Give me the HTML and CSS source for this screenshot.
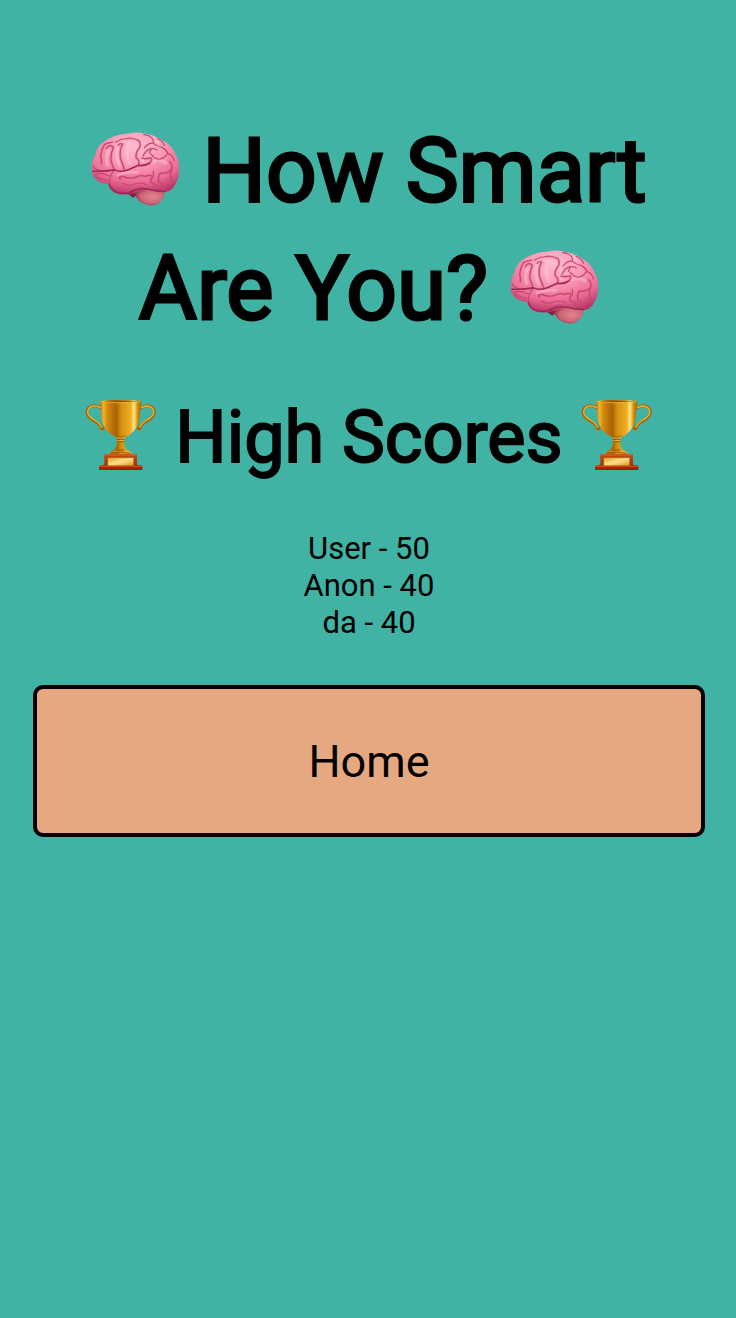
FILE: index.html
```html
<!DOCTYPE html>
<html lang="en">
<head>
<meta charset="utf-8">
<meta name="viewport" content="width=device-width, initial-scale=1">
<title>How Smart Are You?</title>
<link rel="stylesheet" href="styles.css">
</head>
<body>
<svg class="defs" width="0" height="0" aria-hidden="true">
  <defs>
    <radialGradient id="pink" cx=".5" cy=".22" r=".78">
      <stop offset="0" stop-color="#ffbdce"/><stop offset=".4" stop-color="#fb9ab7"/><stop offset=".75" stop-color="#ea6c94"/><stop offset="1" stop-color="#b93668"/>
    </radialGradient>
    <radialGradient id="lobe" cx=".6" cy=".5" r=".6">
      <stop offset="0" stop-color="#e2858c"/><stop offset=".65" stop-color="#cb6373"/><stop offset="1" stop-color="#8a2c47"/>
    </radialGradient>
    <linearGradient id="gold" x1="0" x2="1" y1="0" y2="0">
      <stop offset="0" stop-color="#b06c06"/><stop offset=".1" stop-color="#f0b324"/><stop offset=".2" stop-color="#cf860a"/><stop offset=".4" stop-color="#a86305"/><stop offset=".52" stop-color="#d88f0f"/><stop offset=".74" stop-color="#eeae25"/><stop offset=".82" stop-color="#ffe783"/><stop offset=".9" stop-color="#d9900f"/><stop offset="1" stop-color="#9c5a04"/>
    </linearGradient>
    <linearGradient id="plate" x1="0" x2="1" y1="0" y2="1">
      <stop offset="0" stop-color="#e3a02b"/><stop offset=".5" stop-color="#ffe08a"/><stop offset="1" stop-color="#dc9522"/>
    </linearGradient>
    <linearGradient id="wood" x1="0" x2="0" y1="0" y2="1">
      <stop offset="0" stop-color="#c5480f"/><stop offset="1" stop-color="#8f2605"/>
    </linearGradient>
    <symbol id="brain" viewBox="30 24 270 232">
      <path fill="#7d2343" d="M138 214L158 229L178 214Z"/>
      <path fill="url(#lobe)" d="M160 210C166 234 184 252 214 252C240 250 252 232 255 206C230 198 190 196 160 210Z"/>
      <path fill="url(#pink)" d="M33 148C31 122 36 110 44 96C48 74 66 58 84 50C102 40 124 35 146 34C164 29 184 31 200 36C222 38 238 48 252 58C270 66 280 82 286 96C294 108 299 124 297 142C298 162 292 180 284 190C278 204 266 212 252 211C230 212 214 206 198 204C180 206 168 214 150 217C130 221 108 220 94 208C86 200 82 192 84 186C70 188 52 182 44 172C36 164 32 156 33 148Z"/>
      <g fill="none" stroke-linecap="round" stroke-linejoin="round">
        <g stroke="#ffd0dc" stroke-width="9" opacity=".4">
          <path d="M84 84Q73 106 80 130M110 78Q104 100 116 132M144 62Q133 90 147 124M188 92Q180 106 188 118M206 46Q222 46 234 62M112 160Q142 148 168 152M220 120Q238 108 258 124"/>
        </g>
        <g stroke="#d0527c" stroke-width="8" opacity=".3">
          <path d="M71 67Q62 82 59 103Q64 116 61 126M77 79Q86 64 98 76Q90 92 90 114Q94 130 101 144M126 66Q116 84 119 108Q126 126 131 142M140 49Q158 46 176 56Q181 64 178 76Q164 92 167 108Q179 114 174 130Q190 134 204 126Q218 116 212 108Q194 112 184 108M188 102Q196 84 212 80"/>
          <path d="M119 172Q110 164 126 164Q149 174 168 166Q182 158 194 164Q210 157 218 166Q206 174 214 184Q228 186 231 198M240 154Q232 166 236 181Q249 186 249 204M242 154Q260 157 274 144Q280 132 269 119M274 144Q267 163 277 180"/>
        </g>
        <g stroke="#c4476f" stroke-width="3.6">
          <path d="M71 67Q80 62 96 60M71 67Q62 82 59 103Q64 116 61 126M77 79Q86 64 98 76Q90 92 90 114Q94 130 101 144M101 144Q86 150 62 148Q44 144 36 132M112 70Q118 62 126 66M126 66Q116 84 119 108Q126 126 131 142M104 60Q120 50 140 49M140 49Q158 46 176 56Q181 64 178 76Q164 92 167 108Q179 114 174 130"/>
          <path d="M174 130Q190 134 204 126Q218 116 212 108Q194 112 184 108M188 102Q196 84 212 80Q226 78 231 84M191 78Q202 62 218 63Q232 74 245 76Q258 82 263 94M190 37Q208 38 217 50Q222 57 218 63M231 49Q245 53 253 70M213 80L207 94M263 94Q250 112 234 112Q220 108 212 96M263 94Q280 100 283 118"/>
          <path d="M101 144Q86 160 86 186M119 172Q110 164 126 164Q149 174 168 166Q182 158 194 164Q210 157 218 166M126 184Q142 196 162 187Q184 180 199 189M158 204Q174 193 190 197M218 166Q206 174 214 184Q228 186 231 198M218 166Q221 156 219 148M240 154Q232 166 236 181Q249 186 249 204M242 154Q260 157 274 144Q280 132 269 119M274 144Q267 163 277 180M43 158Q58 151 73 158Q80 162 86 162M43 165Q61 170 81 177"/>
        </g>
        <path stroke="#9e2858" stroke-width="4.5" d="M36 148Q65 150 101 144Q121 153 145 143L174 130Q192 133 208 124M85 188Q92 209 119 215Q144 217 163 206Q183 198 205 203Q229 210 254 210"/>
      </g>
    </symbol>
    <symbol id="trophy" viewBox="22 26 216 216">
      <g fill="none" stroke-linecap="round">
        <g stroke="#a96407" stroke-width="8.5">
          <path d="M69 53C55 41 29 44 28 64C28 78 38 85 48 91C60 97 68 102 71 112M69 112Q72 118 77 114"/>
          <path d="M190 53C204 41 229 44 230 64C230 78 220 85 210 91C198 97 190 102 186 112M189 112Q186 118 181 114"/>
        </g>
        <g stroke="#f1b52b" stroke-width="4">
          <path d="M68 52C54 42 31 46 30 64C30 76 40 83 50 89C61 95 68 101 71 111"/>
          <path d="M191 52C204 43 227 46 228 64C228 76 218 83 208 89C197 95 190 101 187 111"/>
        </g>
      </g>
      <path fill="url(#gold)" d="M65 32Q128 25 192 32Q189 42 188 59Q188 103 168 123Q157 135 143 140L140 152Q140 174 150 180Q163 183 160 193H97Q96 182 107 180Q117 173 119 151L115 140Q98 134 87 120Q70 101 70 59Q70 43 65 32Z"/>
      <path fill="#8f5105" d="M69 33Q128 28 188 33Q128 38 69 33Z"/>
      <path fill="none" stroke="#f6c648" stroke-width="2" d="M67 34Q128 41 190 34M116 141Q128 147 143 140M119 151H140M107 183Q129 192 151 183"/>
      <path fill="none" stroke="#925105" stroke-width="2.5" d="M114 137Q129 143 144 137M119 147H140M118 154H141M100 189Q128 182 158 189M121 179H139"/>
      <path fill="url(#wood)" d="M80 192H178V223L194 226V239H64V226L80 223Z"/>
      <path fill="#d95b1a" d="M80 192H178V196H80ZM64 226H194V229H64Z"/>
      <path fill="url(#plate)" stroke="#9d6113" stroke-width="1.5" d="M90 202H168V226H90Z"/>
    </symbol>
  </defs>
</svg>
<main class="page">
  <h1 class="title"><svg class="emoji" role="img" aria-label="Brain"><use href="#brain"/></svg> How Smart Are You? <svg class="emoji" role="img" aria-label="Brain"><use href="#brain"/></svg></h1>
  <h2 class="subtitle"><svg class="emoji" role="img" aria-label="Trophy"><use href="#trophy"/></svg> High Scores <svg class="emoji" role="img" aria-label="Trophy"><use href="#trophy"/></svg></h2>
  <ul class="scores">
    <li>User - 50</li>
    <li>Anon - 40</li>
    <li>da - 40</li>
  </ul>
  <button class="home" type="button">Home</button>
</main>
</body>
</html>
```
FILE: styles.css
```css
* {
  box-sizing: border-box;
}

body {
  margin: 0;
  background: #40b3a4;
  color: #000;
  font-family: Roboto, "Liberation Sans", sans-serif;
  text-align: center;
}

.defs {
  position: absolute;
}

.page {
  display: flex;
  flex-direction: column;
  padding: 112px 31px 32px 33px;
}

.title,
.subtitle {
  margin: 0;
  font-weight: 400;
}

.title {
  font-size: 89px;
  line-height: 118px;
  -webkit-text-stroke: 3px #000;
}

.subtitle {
  margin-top: 44px;
  font-size: 72px;
  line-height: 92px;
  -webkit-text-stroke: 2px #000;
}

.emoji {
  width: 1em;
  height: 1em;
  vertical-align: -0.13em;
}

.scores {
  margin: 46px 0 0;
  padding: 0;
  list-style: none;
  font-size: 31px;
  line-height: 37px;
}

.home {
  margin-top: 44px;
  padding: 47px 16px 45px;
  border: 4px solid #000;
  border-radius: 10px;
  background: #e6a880;
  color: #000;
  font-family: inherit;
  font-size: 45px;
  line-height: 52px;
  cursor: pointer;
}
```
